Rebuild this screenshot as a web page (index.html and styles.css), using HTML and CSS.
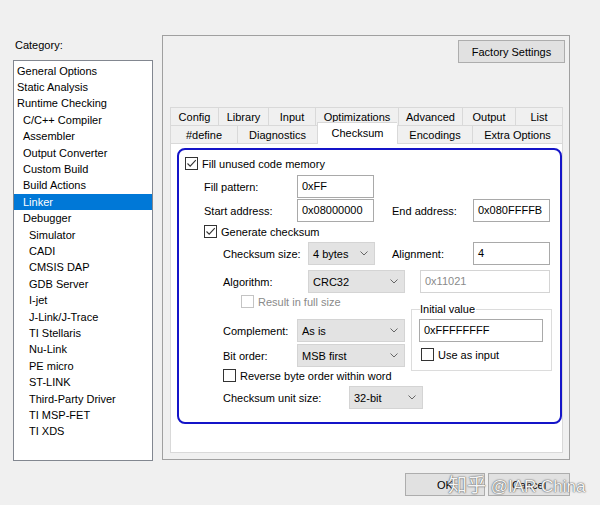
FILE: index.html
```html
<!DOCTYPE html>
<html>
<head>
<meta charset="utf-8">
<title>Options for node</title>
<link rel="stylesheet" href="styles.css">
</head>
<body>
<div class="main">
  <div class="left">
    <div class="cat-label">Category:</div>
    <ul class="cat-list">
      <li class="l0">General Options</li>
      <li class="l0">Static Analysis</li>
      <li class="l0">Runtime Checking</li>
      <li class="l1">C/C++ Compiler</li>
      <li class="l1">Assembler</li>
      <li class="l1">Output Converter</li>
      <li class="l1">Custom Build</li>
      <li class="l1">Build Actions</li>
      <li class="l1 selected">Linker</li>
      <li class="l1">Debugger</li>
      <li class="l2">Simulator</li>
      <li class="l2">CADI</li>
      <li class="l2">CMSIS DAP</li>
      <li class="l2">GDB Server</li>
      <li class="l2">I-jet</li>
      <li class="l2">J-Link/J-Trace</li>
      <li class="l2">TI Stellaris</li>
      <li class="l2">Nu-Link</li>
      <li class="l2">PE micro</li>
      <li class="l2">ST-LINK</li>
      <li class="l2">Third-Party Driver</li>
      <li class="l2">TI MSP-FET</li>
      <li class="l2">TI XDS</li>
    </ul>
  </div>

  <div class="panel">
    <div class="panel-top">
      <button class="btn factory">Factory Settings</button>
    </div>
    <div class="tabs">
      <div class="tab-row">
        <div class="tab t-config">Config</div>
        <div class="tab t-library">Library</div>
        <div class="tab t-input">Input</div>
        <div class="tab t-optim">Optimizations</div>
        <div class="tab t-adv">Advanced</div>
        <div class="tab t-output">Output</div>
        <div class="tab t-list">List</div>
      </div>
      <div class="tab-row">
        <div class="tab t-define">#define</div>
        <div class="tab t-diag">Diagnostics</div>
        <div class="tab t-check active">Checksum</div>
        <div class="tab t-enc">Encodings</div>
        <div class="tab t-extra">Extra Options</div>
      </div>
    </div>
    <div class="content">
      <div class="blue">
        <div class="row rA">
          <span class="cb"><svg width="11" height="11" viewBox="0 0 11 11"><polyline points="1.5,5.5 4.2,8.2 9.8,2.2" fill="none" stroke="#333" stroke-width="1.1"/></svg></span>
          <span class="cb-text">Fill unused code memory</span>
        </div>
        <div class="row rB">
          <span class="lab w93">Fill pattern:</span>
          <span class="inp w77">0xFF</span>
        </div>
        <div class="row rC">
          <span class="lab w93">Start address:</span>
          <span class="inp w77">0x08000000</span>
          <span class="lab w81 gap18">End address:</span>
          <span class="inp w77">0x080FFFFB</span>
        </div>
        <div class="row rD">
          <span class="cb"><svg width="11" height="11" viewBox="0 0 11 11"><polyline points="1.5,5.5 4.2,8.2 9.8,2.2" fill="none" stroke="#333" stroke-width="1.1"/></svg></span>
          <span class="cb-text">Generate checksum</span>
        </div>
        <div class="row rE">
          <span class="lab w85">Checksum size:</span>
          <span class="sel w67"><span>4 bytes</span><svg class="chev" width="8" height="5" viewBox="0 0 8 5"><polyline points="0.5,0.5 4,4 7.5,0.5" fill="none" stroke="#666" stroke-width="1"/></svg></span>
          <span class="lab w81 gap17">Alignment:</span>
          <span class="inp w77">4</span>
        </div>
        <div class="row rF">
          <span class="lab w85">Algorithm:</span>
          <span class="sel w97"><span>CRC32</span><svg class="chev" width="8" height="5" viewBox="0 0 8 5"><polyline points="0.5,0.5 4,4 7.5,0.5" fill="none" stroke="#666" stroke-width="1"/></svg></span>
          <span class="inp disabled w130 gap15">0x11021</span>
        </div>
        <div class="section">
          <div class="sec-left">
            <div class="row rG">
              <span class="cb cb-disabled"></span>
              <span class="cb-text dis-text">Result in full size</span>
            </div>
            <div class="row rH">
              <span class="lab w74">Complement:</span>
              <span class="sel w108"><span>As is</span><svg class="chev" width="8" height="5" viewBox="0 0 8 5"><polyline points="0.5,0.5 4,4 7.5,0.5" fill="none" stroke="#666" stroke-width="1"/></svg></span>
            </div>
            <div class="row rI">
              <span class="lab w74">Bit order:</span>
              <span class="sel w108"><span>MSB first</span><svg class="chev" width="8" height="5" viewBox="0 0 8 5"><polyline points="0.5,0.5 4,4 7.5,0.5" fill="none" stroke="#666" stroke-width="1"/></svg></span>
            </div>
          </div>
          <div class="group">
            <div class="legend"><span>Initial value</span></div>
            <span class="inp w124 g-inp">0xFFFFFFFF</span>
            <div class="row g-cb">
              <span class="cb"></span>
              <span class="cb-text">Use as input</span>
            </div>
          </div>
        </div>
        <div class="row rJ">
          <span class="cb"></span>
          <span class="cb-text">Reverse byte order within word</span>
        </div>
        <div class="row rK">
          <span class="lab w126">Checksum unit size:</span>
          <span class="sel w74"><span>32-bit</span><svg class="chev" width="8" height="5" viewBox="0 0 8 5"><polyline points="0.5,0.5 4,4 7.5,0.5" fill="none" stroke="#666" stroke-width="1"/></svg></span>
        </div>
      </div>
    </div>
  </div>
</div>

<div class="footer">
  <button class="btn ok">OK</button>
  <button class="btn cancel">Cancel</button>
</div>
<div class="watermark"><span class="wm-cjk">知乎</span> @IAR China</div>
</body>
</html>
```

FILE: styles.css
```css
html, body {
  margin: 0;
  padding: 0;
}
body {
  background: #f0f0f0;
  font-family: "Liberation Sans", Arial, sans-serif;
  font-size: 11px;
  color: #000;
  width: 600px;
  height: 505px;
  position: relative;
  overflow: hidden;
}

.main {
  display: flex;
  padding: 35px 0 0 13px;
}

/* ---------- category list ---------- */
.left {
  width: 140px;
}
.cat-label {
  height: 25px;
  line-height: 20px;
  padding-left: 2px;
}
.cat-list {
  margin: 0;
  padding: 1.7px 0 0 0;
  list-style: none;
  height: 401px;
  box-sizing: border-box;
  background: #fff;
  border: 1px solid #828790;
}
.cat-list li {
  height: 16.4px;
  line-height: 16.4px;
  white-space: nowrap;
}
.l0 { padding-left: 3px; }
.l1 { padding-left: 9px; }
.l2 { padding-left: 15px; }
.cat-list li.selected {
  background: #0078d7;
  color: #fff;
}

/* ---------- right panel ---------- */
.panel {
  margin-left: 9px;
  width: 408px;
  height: 425px;
  box-sizing: border-box;
  border: 1px solid #a0a0a0;
}
.panel-top {
  height: 71px;
  box-sizing: border-box;
  display: flex;
  justify-content: flex-end;
  align-items: flex-start;
  padding: 4px 4px 0 0;
}
.btn {
  font: inherit;
  color: #000;
  background: #e1e1e1;
  border: 1px solid #adadad;
  height: 23px;
  padding: 0;
  box-sizing: border-box;
}
.factory { width: 107px; }

/* tabs */
.tabs {
  margin: 0 6px 0 7px;
}
.tab-row {
  display: flex;
  height: 18px;
}
.tab {
  box-sizing: border-box;
  border-top: 1px solid #d9d9d9;
  border-left: 1px solid #d9d9d9;
  display: flex;
  align-items: center;
  justify-content: center;
  white-space: nowrap;
}
.tab:last-child {
  border-right: 1px solid #d9d9d9;
}
.tab.active {
  background: #fff;
  height: 22px;
  margin-top: -3px;
  padding-bottom: 2px;
  position: relative;
  z-index: 1;
}
.t-config  { width: 48px; }
.t-library { width: 50px; }
.t-input   { width: 47px; }
.t-optim   { width: 83px; }
.t-adv     { width: 64px; }
.t-output  { width: 53px; }
.t-list    { width: 48px; }
.t-define  { width: 67px; }
.t-diag    { width: 80px; }
.t-check   { width: 80px; }
.t-enc     { width: 75px; }
.t-extra   { width: 91px; }

.content {
  margin: 0 6px 0 7px;
  height: 310px;
  box-sizing: border-box;
  background: #fff;
  border: 1px solid #d9d9d9;
  padding: 4px 0 0 6px;
}

.blue {
  width: 385px;
  height: 276px;
  box-sizing: border-box;
  border: 2px solid #1414c8;
  border-radius: 8px;
  padding-top: 7px;
}

/* ---------- form rows ---------- */
.row {
  display: flex;
  align-items: center;
  white-space: nowrap;
}
.rA { height: 13px; padding-left: 6px; }
.rB { height: 23px; margin-top: 5px; padding-left: 25px; }
.rC { height: 23px; margin-top: 1px; padding-left: 25px; }
.rD { height: 13px; margin-top: 3px; padding-left: 25px; }
.rE { height: 23px; margin-top: 4px; padding-left: 44px; }
.rF { height: 23px; margin-top: 5px; padding-left: 44px; }
.section {
  display: flex;
  align-items: flex-start;
  margin-top: 2px;
}
.sec-left { width: 232px; }
.rG { height: 13px; padding-left: 62px; }
.rH { height: 23px; margin-top: 11px; padding-left: 44px; }
.rI { height: 23px; margin-top: 2px; padding-left: 44px; }
.rJ { height: 13px; margin-top: -2px; padding-left: 44px; }
.rK { height: 23px; margin-top: 4px; padding-left: 44px; }

.lab { flex: none; }
.w74  { width: 74px; }
.w77  { width: 77px; }
.w81  { width: 81px; }
.w85  { width: 85px; }
.w93  { width: 93px; }
.w97  { width: 97px; }
.w67  { width: 67px; }
.w108 { width: 108px; }
.w124 { width: 124px; }
.w126 { width: 126px; }
.w130 { width: 130px; }
.gap15 { margin-left: 15px; }
.gap17 { margin-left: 17px; }
.gap18 { margin-left: 18px; }

.inp {
  flex: none;
  box-sizing: border-box;
  height: 23px;
  border: 1px solid #a9a9a9;
  background: #fff;
  padding: 0 0 2px 4px;
  display: flex;
  align-items: center;
}
.inp.disabled {
  border-color: #d4d4d4;
  color: #8a8a8a;
}

.sel {
  flex: none;
  box-sizing: border-box;
  height: 23px;
  background: #e3e3e3;
  border: 1px solid #d4d4d4;
  padding: 0 6px 0 4px;
  display: flex;
  align-items: center;
  justify-content: space-between;
}
.chev { flex: none; }

.cb {
  flex: none;
  box-sizing: border-box;
  width: 13px;
  height: 13px;
  border: 1px solid #333;
  background: #fff;
  display: flex;
  align-items: center;
  justify-content: center;
}
.cb svg { display: block; }
.cb-disabled { border-color: #c4c4c4; }
.cb-text { margin-left: 4px; }
.dis-text { color: #8a8a8a; }

/* group box */
.group {
  margin-top: 14px;
  width: 141px;
  height: 62px;
  box-sizing: border-box;
  border: 1px solid #dcdcdc;
}
.legend {
  height: 13px;
  line-height: 13px;
  margin-top: -7px;
  padding-left: 8px;
}
.legend span {
  background: #fff;
  padding: 0 1px 0 0;
}
.g-inp { margin: 3px 0 0 7px; }
.g-cb { height: 13px; margin: 6px 0 0 9px; }

/* ---------- footer ---------- */
.footer {
  display: flex;
  justify-content: flex-end;
  gap: 3px;
  margin-top: 12px;
  padding-right: 30px;
}
.ok { width: 80px; }
.cancel { width: 82px; }

.watermark {
  position: absolute;
  left: 448px;
  top: 473px;
  font-size: 17px;
  line-height: 22px;
  color: #f4f4f4;
  white-space: nowrap;
  text-shadow: 0 0 1px #444, 0 0 2px #777;
}
.wm-cjk {
  font-family: "Noto Sans CJK SC", sans-serif;
  font-size: 19px;
}
```
